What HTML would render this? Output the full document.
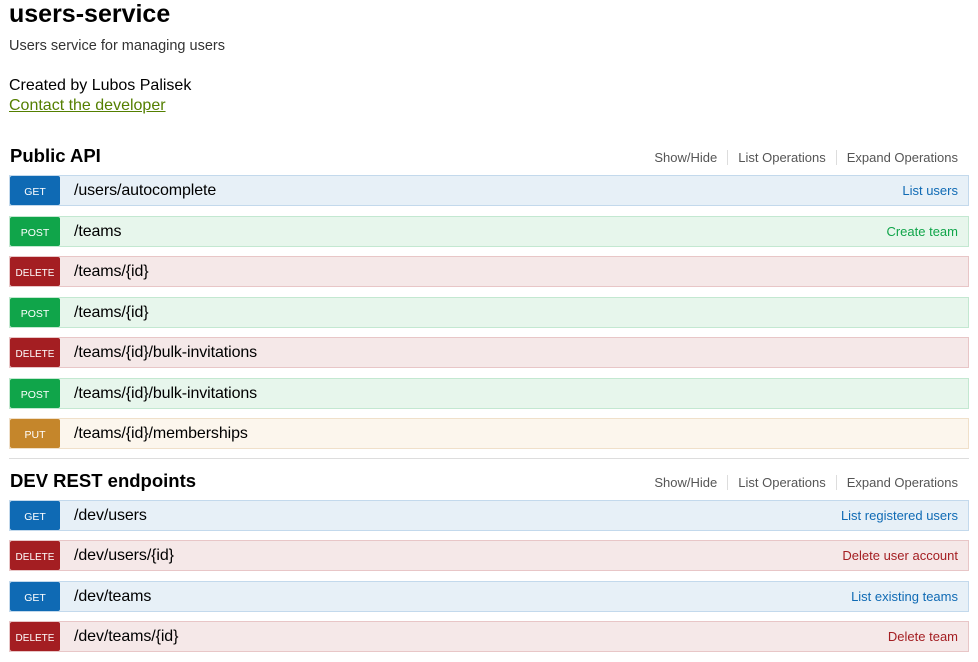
<!DOCTYPE html>
<html><head><meta charset="utf-8"><style>
*{margin:0;padding:0;box-sizing:border-box}
body{width:978px;height:662px;background:#fff;font-family:"Liberation Sans",Arial,sans-serif;position:relative;overflow:hidden}
.a{position:absolute;white-space:nowrap}
.row{position:absolute;left:9px;width:960px;height:31px;border:1px solid}
.b{position:absolute;left:0;top:0;width:50px;height:29px;border-radius:2px;color:#fff;font-size:10.5px;text-align:center;line-height:33px}
.b.d{font-size:10px}
.p{position:absolute;left:64px;top:0;line-height:29px;font-size:16px;color:#000;letter-spacing:-0.1px}
.s{position:absolute;right:10px;top:0;line-height:29px;font-size:13px}
.get{background:#e7f0f7;border-color:#c3d9ec}.get .b{background:#0f6ab4}.get .s{color:#0f6ab4}
.post{background:#e7f6ec;border-color:#c3e8d1}.post .b{background:#10a54a}.post .s{color:#10a54a}
.del{background:#f5e8e8;border-color:#e8c6c7}.del .b{background:#a41e22}.del .s{color:#a41e22}
.put{background:#fcf6ed;border-color:#f0e0ca}.put .b{background:#c5862b}
.h{font-size:18.5px;font-weight:bold;color:#000}
.ops{position:absolute;right:20px;font-size:13px;color:#555}
.ops span{padding:0 10px;border-left:1px solid #ddd}
.ops span:first-child{border-left:none}
.ops span:last-child{padding-right:0}
</style></head><body>
<div class="a" style="left:9px;top:0;font-size:25px;font-weight:bold;color:#000">users-service</div>
<div class="a" style="left:9px;top:38px;font-size:14.5px;color:#333">Users service for managing users</div>
<div class="a" style="left:9px;top:77px;font-size:16px;color:#000">Created by Lubos Palisek</div>
<div class="a" style="left:9px;top:97px;font-size:16px;color:#547f00;text-decoration:underline">Contact the developer</div>

<div class="a h" style="left:10px;top:145px">Public API</div>
<div class="ops" style="top:150px"><span>Show/Hide</span><span>List Operations</span><span>Expand Operations</span></div>

<div class="row get" style="top:175px"><div class="b">GET</div><div class="p">/users/autocomplete</div><div class="s">List users</div></div>
<div class="row post" style="top:216px"><div class="b">POST</div><div class="p">/teams</div><div class="s">Create team</div></div>
<div class="row del" style="top:256px"><div class="b d">DELETE</div><div class="p">/teams/{id}</div></div>
<div class="row post" style="top:297px"><div class="b">POST</div><div class="p">/teams/{id}</div></div>
<div class="row del" style="top:337px"><div class="b d">DELETE</div><div class="p">/teams/{id}/bulk-invitations</div></div>
<div class="row post" style="top:378px"><div class="b">POST</div><div class="p">/teams/{id}/bulk-invitations</div></div>
<div class="row put" style="top:418px"><div class="b">PUT</div><div class="p">/teams/{id}/memberships</div></div>

<div class="a" style="left:9px;top:458px;width:960px;height:1px;background:#ddd"></div>

<div class="a h" style="left:10px;top:470px">DEV REST endpoints</div>
<div class="ops" style="top:475px"><span>Show/Hide</span><span>List Operations</span><span>Expand Operations</span></div>

<div class="row get" style="top:500px"><div class="b">GET</div><div class="p">/dev/users</div><div class="s">List registered users</div></div>
<div class="row del" style="top:540px"><div class="b d">DELETE</div><div class="p">/dev/users/{id}</div><div class="s">Delete user account</div></div>
<div class="row get" style="top:581px"><div class="b">GET</div><div class="p">/dev/teams</div><div class="s">List existing teams</div></div>
<div class="row del" style="top:621px"><div class="b d">DELETE</div><div class="p">/dev/teams/{id}</div><div class="s">Delete team</div></div>
</body></html>
